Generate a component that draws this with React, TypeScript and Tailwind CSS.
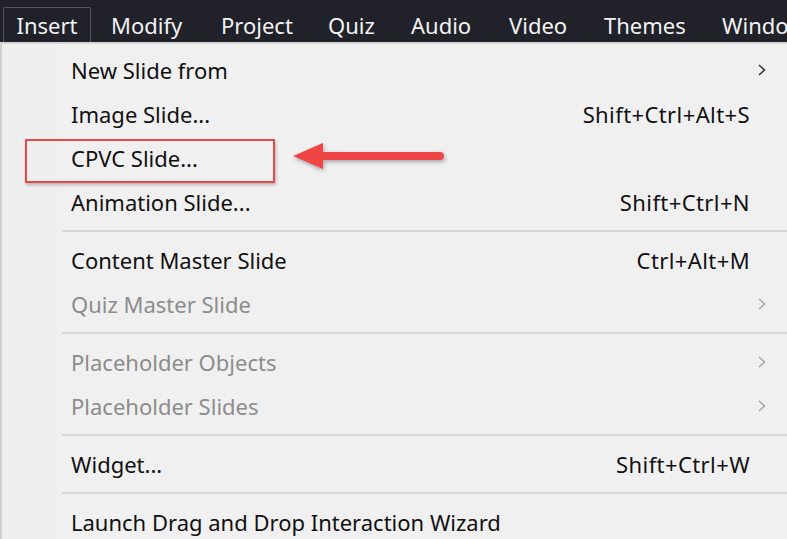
import React from "react";

type Item =
  | { kind: "sep" }
  | { kind: "item"; label: string; shortcut?: string; sub?: boolean; disabled?: boolean };

const menus = [
  { label: "Modify", w: "w-[110px]" },
  { label: "Project", w: "w-[107px]" },
  { label: "Quiz", w: "w-[83px]" },
  { label: "Audio", w: "w-[98px]" },
  { label: "Video", w: "w-[95px]" },
  { label: "Themes", w: "w-[118px]" },
  { label: "Window", w: "w-[100px]" },
];

const items: Item[] = [
  { kind: "item", label: "New Slide from", sub: true },
  { kind: "item", label: "Image Slide...", shortcut: "Shift+Ctrl+Alt+S" },
  { kind: "item", label: "CPVC Slide..." },
  { kind: "item", label: "Animation Slide...", shortcut: "Shift+Ctrl+N" },
  { kind: "sep" },
  { kind: "item", label: "Content Master Slide", shortcut: "Ctrl+Alt+M" },
  { kind: "item", label: "Quiz Master Slide", sub: true, disabled: true },
  { kind: "sep" },
  { kind: "item", label: "Placeholder Objects", sub: true, disabled: true },
  { kind: "item", label: "Placeholder Slides", sub: true, disabled: true },
  { kind: "sep" },
  { kind: "item", label: "Widget...", shortcut: "Shift+Ctrl+W" },
  { kind: "sep" },
  { kind: "item", label: "Launch Drag and Drop Interaction Wizard" },
];

const Chevron = ({ light }: { light?: boolean }) => (
  <svg width="10" height="14" viewBox="0 0 10 14" className={light ? "text-[#a8a8a8]" : "text-[#333]"}>
    <path d="M2 2 L7.5 7 L2 12" fill="none" stroke="currentColor" strokeWidth="1.6" />
  </svg>
);

export default function App() {
  return (
    <div
      className="w-[787px] h-[539px] overflow-hidden bg-[#f0f0f0] relative"
      style={{ fontFamily: '"Noto Sans", "Open Sans", sans-serif' }}
    >
      {/* menu bar */}
      <div className="h-[42px] bg-[#21212a] flex items-end text-[22px] text-[#f2f2f2] whitespace-nowrap">
        <div className="ml-[3px] mr-[20px] h-[35px] w-[88px] flex items-center justify-center border border-b-0 border-[#55555f] rounded-t-[2px] leading-none shrink-0">
          Insert
        </div>
        {menus.map((m) => (
          <div key={m.label} className={"h-[35px] flex items-center leading-none shrink-0 " + m.w}>
            {m.label}
          </div>
        ))}
      </div>
      <div className="h-[2px] bg-[#d4d4d4]" />

      {/* dropdown */}
      <div className="flex border-l-2 border-[#d0d0d0] h-full">
        <div className="w-[60px] bg-[#efefef]" />
        <div className="flex-1 pt-[4px] text-[22px]">
          {items.map((it, i) =>
            it.kind === "sep" ? (
              <div key={i} className="h-[14px] flex items-center">
                <div className="h-[2px] w-full bg-[#d6d6d6]" />
              </div>
            ) : (
              <div
                key={i}
                className={
                  "h-[44px] flex items-center pl-[9px] pr-[20px] whitespace-nowrap " +
                  (it.disabled ? "text-[#8c8c8c]" : "text-[#111]")
                }
              >
                <span className="flex-1">{it.label}</span>
                {it.shortcut && <span className="mr-[17px] tracking-[0.4px]">{it.shortcut}</span>}
                {it.sub && <Chevron light={it.disabled} />}
              </div>
            )
          )}
        </div>
      </div>

      {/* annotation */}
      <div className="absolute left-[25px] top-[139px] w-[250px] h-[44px] border-2 border-[#e84a4a] shadow-[1px_2px_3px_rgba(0,0,0,0.25)]" />
      <svg
        className="absolute left-[290px] top-[140px]"
        width="160"
        height="34"
        viewBox="0 0 160 34"
        style={{ filter: "drop-shadow(1px 2px 2px rgba(0,0,0,0.3))" }}
      >
        <path d="M3 16 L33 3 L33 29 Z" fill="#f04545" />
        <line x1="30" y1="16" x2="150" y2="16" stroke="#f04545" strokeWidth="8" strokeLinecap="round" />
      </svg>
    </div>
  );
}
